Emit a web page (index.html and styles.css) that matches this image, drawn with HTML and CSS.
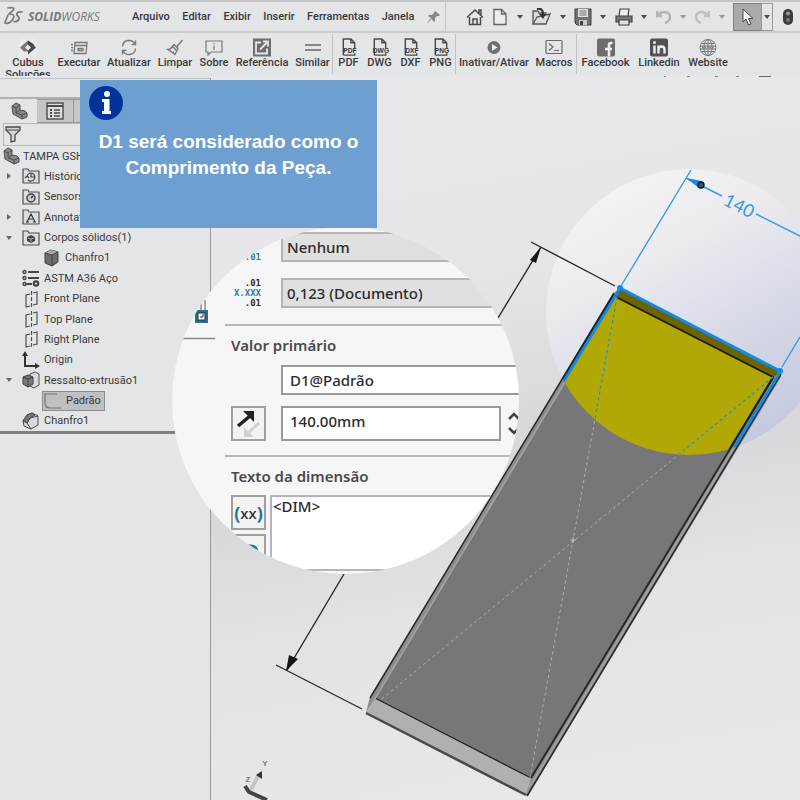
FILE: index.html
```html
<!DOCTYPE html>
<html lang="pt-BR">
<head>
<meta charset="utf-8">
<title>SolidWorks</title>
<link rel="stylesheet" href="styles.css">
</head>
<body>
<div class="app">
  <header class="menubar">
    <div class="brand">
      <svg class="brand-mark" viewBox="0 0 20 22" fill="none" stroke="#77787a" stroke-width="1.7" stroke-linecap="round"><path d="M4 2c5-1 7 0 5 2.500L6 7M5 8c5 0 6 2 4 5-2 3-5 5-8 4 0-2 2-5 3-8"/><path d="M18 6c-4-.5-6 1-5 3s3 2 2 4-3 3-5 2.500"/></svg>
      <span class="brand-name"><b>SOLID</b>WORKS</span>
    </div>
    <nav class="menus">
      <a href="#">Arquivo</a><a href="#">Editar</a><a href="#">Exibir</a><a href="#">Inserir</a><a href="#">Ferramentas</a><a href="#">Janela</a>
      <svg width="14" height="14" viewBox="0 0 14 14"><path d="M8 1l5 4-1 1-2 0-2 2 0 3-1 1-2.500-3L1 13l-.5-.5L4 8 1 6l1-1h3l2-2z" fill="#88898b"/></svg>
    </nav>
    <div class="quick">
      <button aria-label="Início"><svg width="18" height="18" viewBox="0 0 18 18" fill="none" stroke="#48494b" stroke-width="1.500"><path d="M3.500 9v7.500h11V9M1 9.500L9 2l8 7.500M13 5V2h2v5M7 16v-5h4v5" /></svg></button>
      <button aria-label="Novo"><svg width="16" height="18" viewBox="0 0 16 18" fill="#ececed" stroke="#626365" stroke-width="1.300"><path d="M2 1.500h7.500L14 6v10.500H2zM9.500 1.500V6H14"/></svg></button><i class="caret"></i>
      <button aria-label="Abrir"><svg width="20" height="18" viewBox="0 0 20 18" fill="#dcddde" stroke="#555658" stroke-width="1.300"><path d="M2 16V3h5l1 2h7v3"/><path d="M2 16L6 9l13-3-4 10z"/><path d="M6 1c4-1 6 1 6 5" fill="none" stroke="#333" stroke-width="2"/><path d="M8 6h7l-3 5z" fill="#333" stroke="none"/></svg></button><i class="caret"></i>
      <button aria-label="Salvar"><svg width="18" height="18" viewBox="0 0 18 18"><path d="M1 1h16v16H3l-2-2z" fill="#707173" stroke="#404143"/><path d="M4 1h10v8H4z" fill="#dedfe0"/><path d="M5.500 3h7M5.500 5h7M5.500 7h7" stroke="#777"/><path d="M5 12h8v5H5z" fill="#c9cacb"/><path d="M6 13h3v4H6z" fill="#444"/></svg></button><i class="caret"></i>
      <button aria-label="Imprimir"><svg width="18" height="18" viewBox="0 0 18 18" stroke="#404143" stroke-width="1.200"><path d="M4 8L5 1h9l-1 7" fill="#eee"/><path d="M1 8h16v6H1z" fill="#77787a"/><path d="M4 12h10v5H4z" fill="#e0e1e2"/></svg></button><i class="caret"></i>
      <button aria-label="Desfazer"><svg width="16" height="16" viewBox="0 0 16 16" fill="none" stroke="#b4b5b7" stroke-width="2.500"><path d="M1 2v5h5M2 6c5-5 12-3 12 2 0 3-2 5-5 6"/></svg></button><i class="caret soft"></i>
      <button aria-label="Refazer"><svg width="16" height="16" viewBox="0 0 16 16" fill="none" stroke="#bfc0c2" stroke-width="2.500"><path d="M15 2v5h-5M14 6C9 1 2 3 2 8c0 3 2 5 5 6"/></svg></button><i class="caret soft"></i>
      <button class="pick" aria-label="Selecionar"><svg width="14" height="18" viewBox="0 0 14 18"><path d="M2 1v13l3-3 2.500 6 2.500-1-2.500-5.500H12z" fill="#f4f4f4" stroke="#47484a"/></svg></button><span class="pick-more"><i class="caret"></i></span>
      <svg width="12" height="18" viewBox="0 0 12 18"><rect x="1" y="1" width="10" height="16" rx="5" fill="#3b3c3e"/><circle cx="6" cy="5.500" r="2" fill="#98999b"/><circle cx="6" cy="12" r="2" fill="#77787a"/></svg>
    </div>
  </header>

  <div class="ribbon">
    <button class="tool t-cubus"><svg width="18" height="18" viewBox="0 0 18 18"><rect width="18" height="18" fill="#e9eaeb"/><path d="M1 9l8-7v4L6 9l4 4H5z" fill="#77787a"/><path d="M9 2l6 4-2 3-4-3z" fill="#3f4042"/><path d="M17 9l-8 7v-4l3-3-3-3 4-1z" fill="#4b4c4e"/></svg><span>Cubus Soluções</span></button>
    <button class="tool t-exec"><svg width="18" height="18" viewBox="0 0 18 18" fill="none" stroke="#77787a" stroke-width="1.300"><path d="M5 4h12l-1 11H4zM5 7h11M8 10h5v2H8zM1 6h2M1 9h2M1 12h2"/></svg><span>Executar</span></button>
    <button class="tool t-ref"><svg width="18" height="18" viewBox="0 0 18 18" fill="none" stroke="#77787a" stroke-width="1.400"><path d="M2.500 8C3 1 12 0 15 5.500M15.500 2v4h-4M15.500 10c-.5 7-9.500 8-12.500 2.500M2.500 16v-4h4"/></svg><span>Atualizar</span></button>
    <button class="tool t-clean"><svg width="18" height="18" viewBox="0 0 18 18" fill="none" stroke="#77787a" stroke-width="1.400"><path d="M16.500 1.500L11 8M8 6l4 4-3 6-7-5c2 0 4-2 6-5M6.500 8l4 4M5 12l-1 1M8 13l-1 1"/></svg><span>Limpar</span></button>
    <button class="tool t-about"><svg width="18" height="18" viewBox="0 0 18 18" fill="none" stroke="#77787a" stroke-width="1.200"><path d="M1 2.500h16v11H6l-3 3v-3H1zM9 7v4.500M9 4.500v1.200"/></svg><span>Sobre</span></button>
    <button class="tool t-refer"><svg width="18" height="18" viewBox="0 0 18 18"><rect width="18" height="18" fill="#6c6d6f"/><path d="M8 4H3v11h11v-5M10 3h5v5M15 3l-8 8" fill="none" stroke="#e6e7e8" stroke-width="1.800"/></svg><span>Referência</span></button>
    <button class="tool t-sim"><svg width="18" height="18" viewBox="0 0 18 18" stroke="#66676a" stroke-width="1.300"><path d="M1 6.500h16M1 11.500h16"/></svg><span>Similar</span></button>
    <i class="rule"></i>
    <button class="tool t-pdf"><svg width="18" height="20" viewBox="0 0 18 20"><path d="M3 18V1h8l4 4v6M11 1v4h4M3 18h12v-2" fill="none" stroke="#48494b" stroke-width="1.500"/><text x="10" y="16" class="ext">PDF</text></svg><span>PDF</span></button>
    <button class="tool t-dwg"><svg width="18" height="20" viewBox="0 0 18 20"><path d="M3 18V1h8l4 4v6M11 1v4h4M3 18h12v-2" fill="none" stroke="#48494b" stroke-width="1.500"/><text x="10" y="16" class="ext">DWG</text></svg><span>DWG</span></button>
    <button class="tool t-dxf"><svg width="18" height="20" viewBox="0 0 18 20"><path d="M3 18V1h8l4 4v6M11 1v4h4M3 18h12v-2" fill="none" stroke="#48494b" stroke-width="1.500"/><text x="10" y="16" class="ext">DXF</text></svg><span>DXF</span></button>
    <button class="tool t-png"><svg width="18" height="20" viewBox="0 0 18 20"><path d="M3 18V1h8l4 4v6M11 1v4h4M3 18h12v-2" fill="none" stroke="#48494b" stroke-width="1.500"/><text x="10" y="16" class="ext">PNG</text></svg><span>PNG</span></button>
    <i class="rule"></i>
    <button class="tool t-toggle"><svg width="18" height="18" viewBox="0 0 18 18"><circle cx="9" cy="9" r="6.500" fill="#707173"/><path d="M7 5.500l5.500 3.500L7 12.500z" fill="#eee"/></svg><span>Inativar/Ativar</span></button>
    <button class="tool t-macro"><svg width="18" height="18" viewBox="0 0 18 18" fill="none" stroke="#66676a" stroke-width="1.200"><rect x="1" y="2" width="16" height="13" rx="1"/><path d="M4 5l4 3.500L4 12M9 12h5"/></svg><span>Macros</span></button>
    <i class="rule"></i>
    <button class="tool t-face"><svg width="18" height="18" viewBox="0 0 18 18"><rect width="18" height="18" rx="2" fill="#6c6d6f"/><path d="M12 18v-7M8 10.500h7M15.500 4.500H14q-2 0-2 2V11" fill="none" stroke="#eee" stroke-width="2.600"/></svg><span>Facebook</span></button>
    <button class="tool t-linked"><svg width="18" height="18" viewBox="0 0 18 18"><rect width="18" height="18" rx="2" fill="#505153"/><path d="M4.500 7v8M8.500 15V7M8.500 11q0-3 3-3t3 3v4" fill="none" stroke="#eee" stroke-width="2.400"/><circle cx="4.500" cy="4" r="1.500" fill="#eee"/></svg><span>Linkedin</span></button>
    <button class="tool t-web"><svg width="18" height="18" viewBox="0 0 18 18" fill="none" stroke="#77787a"><circle cx="9" cy="9" r="8"/><ellipse cx="9" cy="9" rx="4" ry="8"/><path d="M9 1v16M2.500 5h13M2.500 13h13M1 7.500h16M1 10.500h16"/><path d="M3 9h12" stroke-width="2" stroke-dasharray="1.500 1"/></svg><span>Website</span></button>
  </div>

  <main class="workspace">
    <aside class="sidebar">
      <div class="tabs">
        <button class="tab active" aria-label="Árvore"><svg width="18" height="18" viewBox="0 0 18 18"><use href="#part"/></svg></button>
        <button class="tab" aria-label="Propriedades"><svg width="18" height="18" viewBox="0 0 18 18" fill="none" stroke="#4b4c4e" stroke-width="1.400"><rect x="1" y="1" width="16" height="16" fill="#dcddde"/><path d="M1 4h16" stroke-width="2"/><path d="M4 8h2M4 11h2M4 14h2" stroke-width="2"/><path d="M8 8h6M8 11h6M8 14h6"/></svg></button>
        <button class="tab" aria-label="Configurações"></button>
      </div>
      <div class="filter"><svg width="16" height="17" viewBox="0 0 16 17"><path d="M1 1h14v3l-5 5v6l-4 1V9L1 4z" fill="#d4d5d6" stroke="#48494b" stroke-width="1.300"/><path d="M2 4h12" stroke="#48494b"/></svg></div>
      <ul class="tree">
        <li class="root"><svg width="18" height="18" viewBox="0 0 18 18"><g id="part" stroke="#4a4b4d" stroke-width="1"><path d="M2 4l4-3 4 2v5l5 1 2 2v4l-5 2-9-5z" fill="#88898b"/><path d="M2 4l4 2v5l6 2v4M6 6l4-3M6 11l4-3M12 13l5-2" fill="none"/></g></svg>TAMPA GSH</li>
        <li class="open-r"><svg width="18" height="18" viewBox="0 0 18 18"><use href="#folder"/><path d="M5 9a4 4 0 1 1 1 4M3 11l2-2 2 2M9 7v3h3" fill="none" stroke="#444" stroke-width="1.200"/></svg>Histórico</li>
        <li><svg width="18" height="18" viewBox="0 0 18 18"><use href="#folder"/><circle cx="9" cy="10" r="4" fill="#ccc" stroke="#444" stroke-width="1.500"/><path d="M9 10l2-2" stroke="#333" stroke-width="1.500"/></svg>Sensors</li>
        <li class="open-r"><svg width="18" height="18" viewBox="0 0 18 18"><g id="folder"><path d="M1 16V2h5l1 2h10v12z" fill="#dcddde" stroke="#505153" stroke-width="1.200"/></g><path d="M5 14l4-8 4 8M6.500 11h5M4 14h3M11 14h3" fill="none" stroke="#333" stroke-width="1.200"/></svg>Annotations</li>
        <li class="open-d"><svg width="18" height="18" viewBox="0 0 18 18"><use href="#folder"/><path d="M5 8l4-2 4 2v4l-4 2-4-2z" fill="#444"/><path d="M6 9l3 1v3M9 10l3-1" stroke="#aaa" fill="none"/></svg>Corpos sólidos(1)</li>
        <li class="child"><svg width="18" height="18" viewBox="0 0 18 18"><path d="M2 4l6-3 7 2v10l-6 4-7-3z" fill="#6a6b6d" stroke="#444"/><path d="M2 4l7 2 6-3-7-2z" fill="#a7a8aa"/><path d="M9 6v11M2 4l7 2 6-3" fill="none" stroke="#444"/></svg>Chanfro1</li>
        <li><svg width="18" height="18" viewBox="0 0 18 18" fill="none" stroke="#444" stroke-width="1.400"><circle cx="2.500" cy="3" r="1.500"/><circle cx="2.500" cy="9" r="1.500"/><circle cx="2.500" cy="15" r="1.500"/><path d="M6 3h11M6 9h11M4 15h6" stroke-width="1.800"/><circle cx="14" cy="14.500" r="2.200" stroke-width="2.200"/></svg>ASTM A36 Aço</li>
        <li><svg width="18" height="18" viewBox="0 0 18 18"><use href="#plane"/></svg>Front Plane</li>
        <li><svg width="18" height="18" viewBox="0 0 18 18"><g id="plane" fill="none" stroke="#505153" stroke-width="1.200"><path d="M8 4L4 5v12l4-1M11 3l4-1v12l-4 1M9.500 1v4M9.500 7v4M9.500 13v4"/></g></svg>Top Plane</li>
        <li><svg width="18" height="18" viewBox="0 0 18 18"><use href="#plane"/></svg>Right Plane</li>
        <li><svg width="18" height="18" viewBox="0 0 18 18"><path d="M3 4v11h11" fill="none" stroke="#333" stroke-width="2"/><path d="M0 5l3-5 3 5zM13 12l5 3-5 3z" fill="#333"/></svg>Origin</li>
        <li class="open-d"><svg width="18" height="18" viewBox="0 0 18 18"><path d="M8 3l5-2 4 2v11l-5 3-4-2z" fill="#d8d9da" stroke="#505153"/><path d="M1 6l5-2 5 2v7l-5 3-5-3z" fill="#77787a" stroke="#3f4042"/><path d="M1 6l5 2v8M6 8l5-2" fill="none" stroke="#3f4042"/></svg>Ressalto-extrusão1</li>
        <li class="child"><span class="selected"><svg width="18" height="16" viewBox="0 0 18 16"><path d="M13 1H1v9q0 5 5 5h11" fill="none" stroke="#707173" stroke-width="1.200"/></svg>Padrão</span></li>
        <li><svg width="18" height="18" viewBox="0 0 18 18" stroke="#48494b"><path d="M1 9l4-6 5-2 6 3v9l-7 4-7-3z" fill="#d8d9da"/><path d="M1 9l4-6 5-2 3 2-5 3-3 5z" fill="#77787a"/><path d="M5 11l3-5 8-2M5 11l4 6" fill="none"/></svg>Chanfro1</li>
      </ul>
    </aside>

    <section class="viewport">
      <svg class="scene" viewBox="211 76 589 724" preserveAspectRatio="xMinYMin slice">
        <defs>
          <linearGradient id="halo" x1="0.200" y1="0.100" x2="0.700" y2="1"><stop offset="0" stop-color="#f2f2f3"/><stop offset=".25" stop-color="#ececef"/><stop offset=".6" stop-color="#d7dae7"/><stop offset="1" stop-color="#c3c8df"/></linearGradient>
          <clipPath id="spot"><circle cx="689" cy="312" r="143"/></clipPath>
        </defs>
        <path d="M664 76.500h2M687 76.500h3M715 76.500h3M736 76.500h3" stroke="#88898b"/><path d="M759 76h12" stroke="#66676a" stroke-width="2"/>
        <circle cx="689" cy="312" r="143" fill="url(#halo)"/>
        <path d="M619 288L780 371 781 377 528 796 366 712 370 697 614 293z" fill="#8c8d8f"/>
        <path d="M617 297L773 377 531 778 375 698z" fill="#777779"/>
        <path d="M375 698L531 778 526 795 366 712z" fill="#b0b0b2"/>
        <path d="M375 698L531 778" stroke="#222" stroke-width="1.300"/>
        <path d="M366 713L526 795" stroke="#48484a" stroke-width="2.500"/>
        <path d="M614 293L370 698" stroke="#29292b" stroke-width="1.500"/>
        <path d="M616 297L373 702" stroke="#a3a3a5" stroke-width="1.500"/>
        <path d="M773 378L531 778" stroke="#29292b" stroke-width="2"/>
        <path d="M777 376L529 788" stroke="#a0a0a2" stroke-width="2"/>
        <path d="M781 374L527 796" stroke="#29292b" stroke-width="1.500"/>
        <g clip-path="url(#spot)">
          <path d="M617 296L773 377 700 498 530 440z" fill="#b1a805"/>
          <path d="M619 288L780 371 773 378 616 297z" fill="#6b6305"/>
          <path d="M616 297L773 377 700 498" fill="none" stroke="#1d1c08" stroke-width="1.800"/>
          <path d="M614 294L550 400" stroke="#1d2925" stroke-width="2"/>
          <path d="M619 290L550 404M779 374L730 454" stroke="#118ae0" stroke-width="2.800"/>
        </g>
        <path d="M617 297L530 778M773 377L378 702" stroke="#aeaeb0" stroke-dasharray="3 3" fill="none"/>
        <path d="M617 297L530 778M773 377L378 702" stroke="#2d929c" stroke-width="1.300" stroke-dasharray="3 3" fill="none" clip-path="url(#spot)"/>
        <path d="M570 540h6M573 537v6" stroke="#c2c2c4"/>
        <path d="M620 288L780 371" stroke="#118ae8" stroke-width="3"/>
        <circle cx="620" cy="288" r="3" fill="#118ae8"/><circle cx="780" cy="371" r="3" fill="#118ae8"/>
        <path d="M691 170L621 286M686 178L722 196M756 214L800 236M782 367L800 337" stroke="#3798ec" stroke-width="1.400"/>
        <path d="M686 178L702 181 699 188z" fill="#118ae8"/><circle cx="701" cy="185" r="3" fill="#175d93" stroke="#111" stroke-width="1.300"/>
        <text class="dim" transform="translate(739 206) rotate(27)" x="0" y="6">140</text>
        <path d="M531 242L615 286M541 247L498 318M344 574L287 670M276 665L362 709" stroke="#29292b" stroke-width="1.400"/>
        <path d="M541 247L536 263 530 260zM286 671L289 655 298 659z" fill="#151517"/>
        <path d="M251 790L258 776" stroke="#c5c6c8" stroke-width="4"/><path d="M256 775L262 771 262 779z" fill="#333"/>
        <path d="M245 786L249 792 267 800" fill="none" stroke="#444547" stroke-width="4"/>
        <text class="axis" x="265" y="766">Y</text><text class="axis" x="248" y="782">Z</text>
      </svg>
    </section>
  </main>

  <section class="lens">
    <div class="lens-side"><svg width="34" height="40" viewBox="0 0 34 40"><path d="M20 1v10M24 0v10" stroke="#555"/><rect x="14" y="10" width="13" height="13" fill="#1f7199"/><rect x="17" y="13" width="7" height="7" fill="#f6f6f6" stroke="#333"/><path d="M19 17h3v-3" fill="none" stroke="#333"/><path d="M0 38.500h34" stroke="#88898b" stroke-width="1.500"/></svg></div>
    <div class="panel">
      <div class="row tol"><span class="precision"><i class="blue">.01</i></span><select aria-label="Tipo de tolerância"><option>Nenhum</option></select></div>
      <div class="row prec"><span class="precision">.01<i class="blue">X.XXX</i>.01</span><select aria-label="Precisão"><option>0,123 (Documento)</option></select></div>
      <h2>Valor primário</h2>
      <div class="row name"><input type="text" aria-label="Nome" value="D1@Padrão"></div>
      <div class="row value"><button class="box" aria-label="Inverter"><svg width="26" height="28" viewBox="0 0 26 28"><path d="M2 16L14 6" stroke="#222" stroke-width="3.500"/><path d="M7 1h11v11l-3-3-5-5z" fill="#222"/><path d="M23 13L11 24" stroke="#d0d0d0" stroke-width="3"/><path d="M8 17v10h10z" fill="#d0d0d0"/></svg></button><input type="text" class="amount" aria-label="Valor" value="140.00mm"><span class="spin"><svg width="16" height="30" viewBox="0 0 16 30" fill="none" stroke="#444" stroke-width="2.500"><path d="M2 11l5-5 5 5M2 20l5 5 5-5"/></svg></span></div>
      <h2>Texto da dimensão</h2>
      <div class="text-row">
        <div class="stack"><button class="box xx"><b>(</b>xx<b>)</b></button><button class="box" aria-label="Símbolo"><svg width="28" height="28" viewBox="0 0 28 28" fill="none" stroke="#24749b" stroke-width="3"><path d="M8 8h8q6 0 6 7"/></svg></button></div>
        <textarea aria-label="Texto da dimensão">&lt;DIM&gt;</textarea>
      </div>
    </div>
  </section>

  <section class="callout">
    <svg width="34" height="34" viewBox="0 0 34 34"><circle cx="17" cy="17" r="17" fill="#003399"/><circle cx="18" cy="8" r="3" fill="#fff"/><path d="M13 13h7.500v12H22v3h-9v-3h2v-9h-2z" fill="#fff"/></svg>
    <p>D1 será considerado como o Comprimento da Peça.</p>
  </section>
</div>
</body>
</html>
```
FILE: styles.css
```css
* { box-sizing: border-box; }
body {
  margin: 0;
  background: #e4e5e7;
  color: #38393b;
  font-family: Roboto, "Noto Sans", sans-serif;
  font-size: 11px;
}
button { padding: 0; border: 0; background: none; color: inherit; font: inherit; }
svg { display: block; flex: none; }
.app { position: relative; display: flex; flex-direction: column; min-height: 100vh; overflow: hidden; }

.menubar { display: flex; height: 33px; border-top: 2px solid #c4c5c7; border-bottom: 2px solid #c9cacc; }
.brand { display: flex; flex: none; align-items: center; gap: 4px; width: 132px; padding-left: 4px; color: #77787a; font-family: "Open Sans", sans-serif; font-size: 12px; font-style: italic; }
.brand-mark { width: 20px; height: 22px; }
.menus { display: flex; flex: none; align-items: center; justify-content: space-between; width: 314px; padding-right: 4px; border-right: 1px solid #c4c5c7; font-weight: 500; }
.menus a { color: inherit; text-decoration: none; }
.quick { display: flex; flex: 1; align-items: center; justify-content: space-between; padding: 0 6px 0 20px; }
.caret { border: 3px solid transparent; border-top: 4px solid #48494b; border-bottom: 0; }
.caret.soft { border-top-color: #98999b; }
.pick { display: grid; place-items: center; width: 29px; height: 28px; border: 1px solid #808183; background: #a9aaac; }
.pick-more { display: grid; place-items: center; width: 12px; height: 28px; margin-left: -9px; border: 1px solid #98999b; }

.ribbon { display: flex; height: 43px; overflow: hidden; padding: 5px 0 0 3px; font-weight: 500; }
.tool { display: flex; flex: none; flex-direction: column; align-items: center; justify-content: flex-start; line-height: 12px; }
.tool svg { height: 19px; }
.rule { width: 1px; height: 40px; margin-top: -4px; background: #c1c2c4; }
.t-cubus { width: 50px; } .t-exec { width: 52px; } .t-ref { width: 48px; } .t-clean { width: 44px; }
.t-about { width: 34px; } .t-refer { width: 62px; } .t-sim { width: 39px; }
.t-pdf, .t-dwg, .t-dxf { width: 31px; } .t-png { width: 29px; }
.t-toggle { width: 76px; } .t-macro { width: 44px; } .t-face { width: 57px; } .t-linked { width: 50px; } .t-web { width: 48px; }
.ext { font: bold 7px "Liberation Sans", sans-serif; fill: #333; text-anchor: middle; }

.workspace { display: flex; flex: 1; }
.sidebar { width: 211px; margin-top: 2px; border-top: 1px solid #c1c2c4; border-right: 1px solid #98999b; }
.tabs { display: flex; height: 26px; margin-top: 18px; border-top: 2px solid #b0b1b3; }
.tab { display: grid; place-items: center; width: 37px; border: 1px solid #98999b; border-left: 0; background: #c5c6c8; }
.tab.active { border: 0; background: none; }
.filter { height: 23px; padding: 2px 1px; margin-left: 3px; border: 1px solid #b6b7b9; }
.tree { display: flex; flex-direction: column; justify-content: space-between; height: 288px; margin: 0; padding: 0; border-bottom: 3px solid #808183; list-style: none; }
.tree li { position: relative; display: flex; align-items: center; gap: 4px; height: 20px; padding-left: 22px; white-space: nowrap; }
.tree .root { gap: 3px; padding-left: 2px; }
.tree .child { padding-left: 43px; }
.open-r::before, .open-d::before { position: absolute; left: 7px; border: 3px solid transparent; border-left: 4px solid #66676a; border-right: 0; content: ""; }
.open-d::before { left: 6px; border: 3px solid transparent; border-top: 4px solid #66676a; border-bottom: 0; }
.selected { display: flex; align-items: center; gap: 4px; height: 20px; padding: 0 3px 0 1px; margin-left: -1px; border: 1px solid #8c8d8f; background: #bfc0c2; }
.viewport { position: relative; flex: 1; background: linear-gradient(170deg, #e9e9eb 0%, #e6e6e8 28%, #d6d7d9 52%, #e2e3e4 70%, #e9e9eb 100%); }
.scene { position: absolute; width: 100%; height: 100%; }
.dim { fill: #3798ec; font: 18px Lato, sans-serif; text-anchor: middle; }
.axis { fill: #77787a; font: bold 8px "Liberation Sans", sans-serif; text-anchor: middle; }

.lens { position: absolute; top: 227px; left: 172px; display: flex; width: 347px; height: 347px; overflow: hidden; border-radius: 50%; background: #f6f6f6; color: #2b2b2d; font-family: "Noto Sans", "Open Sans", sans-serif; font-size: 15px; font-weight: 500; }
.lens-side { flex: none; width: 53px; padding: 73px 0 0 9px; }
.panel { flex: 1; min-width: 0; padding-top: 5px; }
.row { display: flex; height: 30px; margin-bottom: 16px; padding-left: 6px; }
.precision { display: flex; flex-direction: column; justify-content: center; width: 50px; padding-right: 20px; font: bold 9px/10px "DejaVu Sans Mono", monospace; text-align: right; }
.precision i { font-style: normal; }
.precision .blue { color: #2b7ca3; }
.tol .precision { justify-content: flex-end; }
.lens select, .lens input { height: 100%; flex: 1; min-width: 0; padding: 0 7px; border: 2px solid #999; border-radius: 0; background: #fff; color: inherit; font: inherit; appearance: none; }
.lens select { padding: 0 4px; border-color: #b4b4b4; background: #e0e0e0; }
.lens h2 { margin: 0; padding: 9px 6px 0; border-top: 2px solid #b9b9b9; color: #4a4a4c; font-size: 15px; font-weight: 600; line-height: 20px; }
.name { margin: 10px -12px 11px 0; padding-left: 56px; }
.value { height: 35px; margin-bottom: 14px; }
.box { display: grid; flex: none; place-items: center; width: 35px; height: 35px; border: 2px solid #a0a0a0; background: #f3f3f3; }
.value .box { margin-right: 15px; }
.lens .amount { flex: 0 0 220px; padding-bottom: 5px; }
.spin { flex: none; padding: 2px 6px; }
.text-row { display: flex; gap: 4px; margin-top: 9px; padding-left: 6px; }
.stack { display: flex; flex-direction: column; gap: 4px; }
.box.xx { display: flex; align-items: center; justify-content: center; font-size: 15px; }
.xx b { color: #24749b; font-size: 18px; }
.lens textarea { flex: 1; min-width: 0; height: 76px; padding: 0 1px; border: 2px solid #b4b4bc; background: #fff; color: inherit; font: inherit; line-height: 18px; resize: none; }

.callout { position: absolute; top: 80px; left: 80px; width: 297px; height: 148px; padding: 6px 9px; background: #6d9fd1; color: #fff; font: bold 19px/26px "Liberation Sans", sans-serif; text-align: center; }
.callout p { margin: 9px 0 0; }
```
